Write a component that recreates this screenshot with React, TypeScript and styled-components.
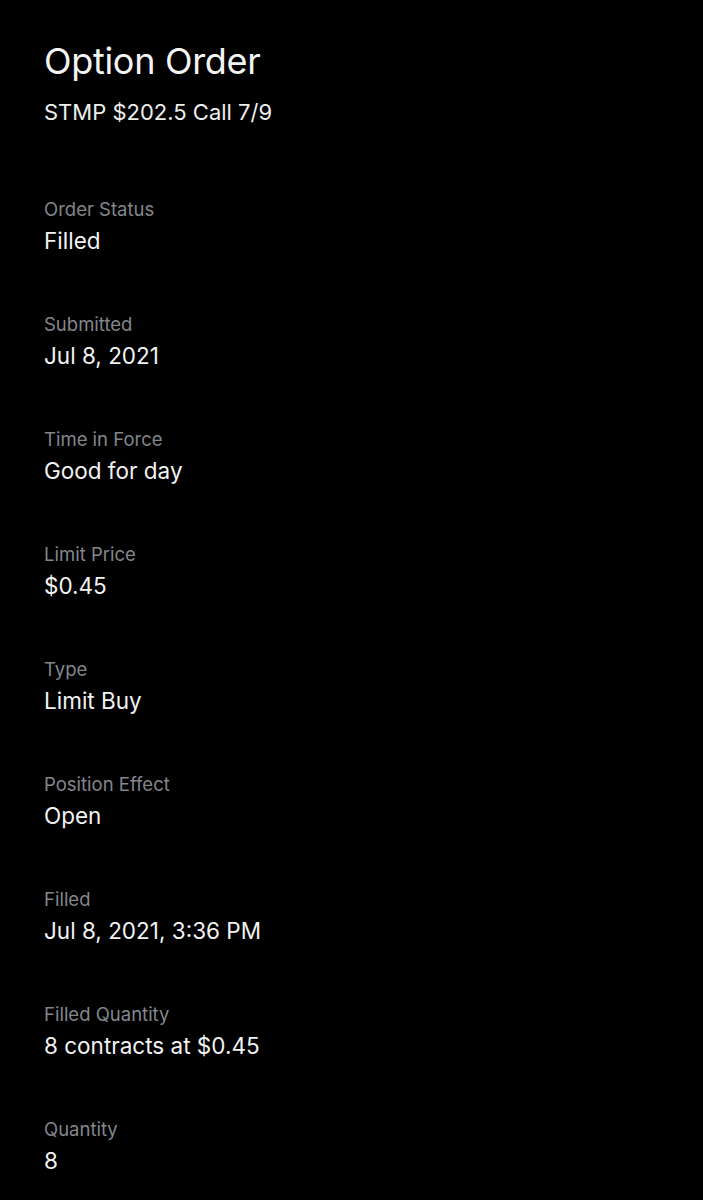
import React from "react";
import styled, { createGlobalStyle } from "styled-components";

const Global = createGlobalStyle`
  html, body { margin: 0; padding: 0; background: #000; }
  body { font-family: Inter, "Noto Sans", sans-serif; -webkit-font-smoothing: antialiased; }
`;

const Page = styled.div`
  background: #000;
  min-height: 1200px;
  padding: 38px 44px 0;
  box-sizing: border-box;
  display: flex;
  flex-direction: column;
`;

const Title = styled.h1`
  margin: 0;
  font-size: 36px;
  line-height: 46px;
  font-weight: 400;
  color: #f4f4f4;
  letter-spacing: -0.3px;
`;

const Subtitle = styled.div`
  margin-top: 14px;
  font-size: 22px;
  line-height: 28px;
  color: #eeeeee;
  letter-spacing: 0px;
`;

const List = styled.dl`
  margin: 71px 0 0;
  display: flex;
  flex-direction: column;
  gap: 56px;
`;

const Row = styled.div`
  display: flex;
  flex-direction: column;
  gap: 5px;
`;

const Label = styled.dt`
  font-size: 18.5px;
  line-height: 24px;
  color: #83878c;
  letter-spacing: 0px;
`;

const Value = styled.dd`
  margin: 0;
  font-size: 22.5px;
  line-height: 30px;
  color: #f2f2f2;
  letter-spacing: 0px;
`;

const rows: [string, string][] = [
  ["Order Status", "Filled"],
  ["Submitted", "Jul 8, 2021"],
  ["Time in Force", "Good for day"],
  ["Limit Price", "$0.45"],
  ["Type", "Limit Buy"],
  ["Position Effect", "Open"],
  ["Filled", "Jul 8, 2021, 3:36 PM"],
  ["Filled Quantity", "8 contracts at $0.45"],
  ["Quantity", "8"],
];

export default function App() {
  return (
    <>
      <Global />
      <Page>
        <Title>Option Order</Title>
        <Subtitle>STMP $202.5 Call 7/9</Subtitle>
        <List>
          {rows.map(([l, v]) => (
            <Row key={l}>
              <Label>{l}</Label>
              <Value>{v}</Value>
            </Row>
          ))}
        </List>
      </Page>
    </>
  );
}
